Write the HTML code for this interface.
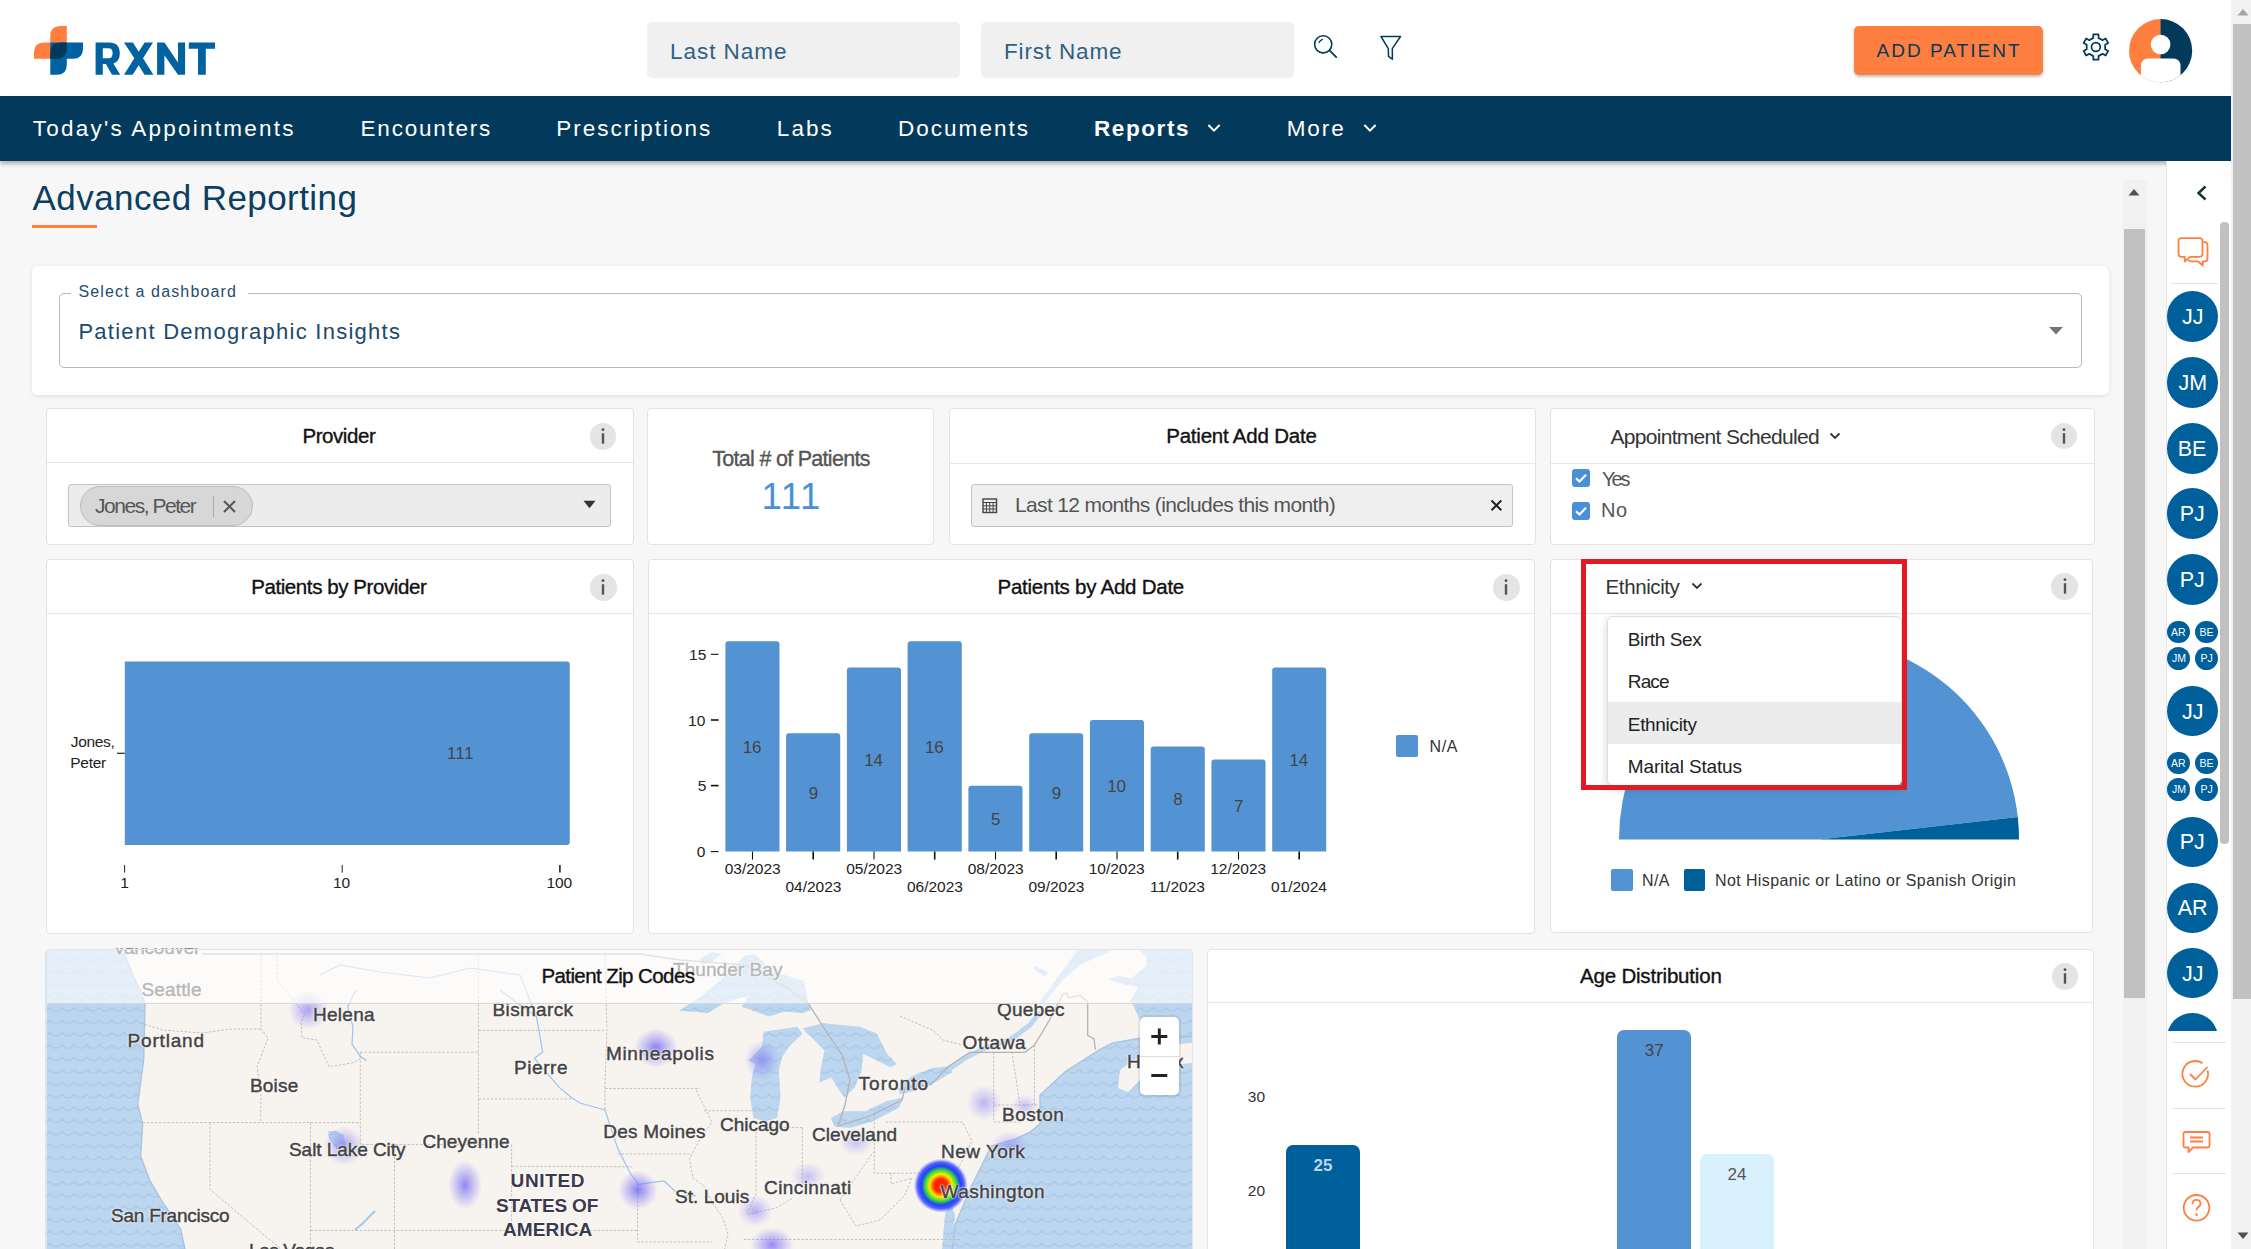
<!DOCTYPE html><html><head><meta charset="utf-8"><style>
html,body{margin:0;padding:0;width:2251px;height:1249px;overflow:hidden;font-family:"Liberation Sans",sans-serif}
</style></head><body><div style="position:relative;width:2251px;height:1249px;overflow:hidden">
<div style="position:absolute;left:0px;top:0px;width:2251px;height:1249px;background:#f7f7f7"></div>
<div style="position:absolute;left:0px;top:0px;width:2231px;height:96px;background:#fff"></div>
<svg style="position:absolute;left:0;top:0" width="230" height="96" viewBox="0 0 230 96">
<path d="M50.3 36 Q50.3 26 60.3 26 L66.8 26 L66.8 58.7 L34 58.7 L34 52.5 Q34 42.5 44 42.5 L50.3 42.5 Z" fill="#ff7f41"/>
<path d="M50.3 42.5 L83 42.5 L83 48.7 Q83 58.7 73 58.7 L66.8 58.7 L66.8 64.8 Q66.8 74.8 56.8 74.8 L50.3 74.8 Z" fill="#0062a0"/>
<path d="M50.3 52.5 Q50.3 42.5 60.3 42.5 L66.8 42.5 L66.8 48.7 Q66.8 58.7 56.8 58.7 L50.3 58.7 Z" fill="#033a5c"/>
</svg>
<svg style="position:absolute;left:0;top:0" width="230" height="96" viewBox="0 0 230 96"><g fill="#0062a0">
<path fill-rule="evenodd" d="M95.6,74.8 V42.5 H109 Q119.8,42.5 119.8,53.5 Q119.8,61.3 113.3,63.6 L120.3,74.8 H112 L105.9,63.9 H102.8 V74.8 Z M102.8,48.3 H108.6 Q112.6,48.3 112.6,53.3 Q112.6,58.3 108.6,58.3 H102.8 Z"/>
<path d="M124,42.5 H132.9 L138.7,51.8 L144.6,42.5 H153 L143,58.2 L153.4,74.8 H144.5 L138.7,65.2 L132.6,74.8 H124 L134.3,58.2 Z"/>
<path d="M157.1,74.8 V42.5 H164.4 L178,62.6 V42.5 H185.1 V74.8 H178 L164.4,55.3 V74.8 Z"/>
<path d="M188.8,42.5 H215 V48.7 H205.8 V74.8 H198 V48.7 H188.8 Z"/>
</g></svg>
<div style="position:absolute;left:647px;top:22px;width:313px;height:56px;background:#f0f0f0;border-radius:5px"></div>
<div style="position:absolute;left:981px;top:22px;width:313px;height:56px;background:#f0f0f0;border-radius:5px"></div>
<span style="position:absolute;left:670.00px;top:41.00px;font-size:22.5px;line-height:1;font-weight:400;color:#2f6184;letter-spacing:0.964px;white-space:nowrap;font-family:'Liberation Sans',sans-serif;">Last Name</span>
<span style="position:absolute;left:1004.00px;top:41.00px;font-size:22.5px;line-height:1;font-weight:400;color:#2f6184;letter-spacing:0.834px;white-space:nowrap;font-family:'Liberation Sans',sans-serif;">First Name</span>
<svg style="position:absolute;left:1300px;top:25px" width="50" height="45" viewBox="1300 25 50 45">
<circle cx="1323.2" cy="44.3" r="8.6" fill="none" stroke="#033a5c" stroke-width="1.6"/>
<path d="M1319 42.5 Q1320 40.3 1322.4 39.3" fill="none" stroke="#033a5c" stroke-width="1.3" stroke-linecap="round"/>
<path d="M1329.8 50.6 L1336.2 57.1" stroke="#033a5c" stroke-width="1.8" stroke-linecap="round"/>
</svg>
<svg style="position:absolute;left:1370px;top:25px" width="45" height="45" viewBox="1370 25 45 45">
<path d="M1381 36.5 L1400.5 36.5 L1392.3 48.6 L1392.4 59.2 L1388.5 56.3 L1388.3 48.6 Z" fill="none" stroke="#033a5c" stroke-width="1.5" stroke-linejoin="round"/>
</svg>
<div style="position:absolute;left:1854px;top:26px;width:189px;height:49px;background:#ff7f41;border-radius:5px;box-shadow:0 2px 3px rgba(0,0,0,0.25)"></div>
<span style="position:absolute;left:1876.50px;top:41.00px;font-size:19.0px;line-height:1;font-weight:400;color:#033a5c;letter-spacing:2.030px;white-space:nowrap;font-family:'Liberation Sans',sans-serif;">ADD PATIENT</span>
<svg style="position:absolute;left:2079px;top:30px" width="34" height="34" viewBox="-16.9 -17 34 34">
<polygon points="-2.62,-9.13 -2.57,-12.64 2.57,-12.64 2.62,-9.13 6.60,-6.83 9.66,-8.55 12.23,-4.09 9.22,-2.30 9.22,2.30 12.23,4.09 9.66,8.55 6.60,6.83 2.62,9.13 2.57,12.64 -2.57,12.64 -2.62,9.13 -6.60,6.83 -9.66,8.55 -12.23,4.09 -9.22,2.30 -9.22,-2.30 -12.23,-4.09 -9.66,-8.55 -6.60,-6.83" fill="none" stroke="#033a5c" stroke-width="1.75" stroke-linejoin="round"/>
<circle cx="0" cy="0" r="4.4" fill="none" stroke="#033a5c" stroke-width="1.75"/></svg>
<svg style="position:absolute;left:2128px;top:18px" width="66" height="66" viewBox="2128 18 66 66">
<defs><clipPath id="avc"><circle cx="2160.6" cy="50.7" r="31.6"/></clipPath></defs>
<g clip-path="url(#avc)">
<rect x="2128" y="18" width="33" height="66" fill="#ff7f41"/>
<rect x="2160.6" y="18" width="34" height="66" fill="#033a5c"/>
<circle cx="2160.6" cy="44.5" r="9.8" fill="#fff"/>
<rect x="2141" y="58.5" width="39.5" height="40" rx="7" fill="#fff"/>
</g></svg>
<div style="position:absolute;left:0px;top:96px;width:2231px;height:65px;background:#033a5c;box-shadow:0 3px 4px rgba(0,0,0,0.28)"></div>
<span style="position:absolute;left:32.70px;top:118.00px;font-size:22.5px;line-height:1;font-weight:400;color:#fff;letter-spacing:2.238px;white-space:nowrap;font-family:'Liberation Sans',sans-serif;">Today's Appointments</span>
<span style="position:absolute;left:360.60px;top:118.00px;font-size:22.5px;line-height:1;font-weight:400;color:#fff;letter-spacing:1.759px;white-space:nowrap;font-family:'Liberation Sans',sans-serif;">Encounters</span>
<span style="position:absolute;left:556.30px;top:118.00px;font-size:22.5px;line-height:1;font-weight:400;color:#fff;letter-spacing:1.992px;white-space:nowrap;font-family:'Liberation Sans',sans-serif;">Prescriptions</span>
<span style="position:absolute;left:776.80px;top:118.00px;font-size:22.5px;line-height:1;font-weight:400;color:#fff;letter-spacing:2.087px;white-space:nowrap;font-family:'Liberation Sans',sans-serif;">Labs</span>
<span style="position:absolute;left:897.90px;top:118.00px;font-size:22.5px;line-height:1;font-weight:400;color:#fff;letter-spacing:2.044px;white-space:nowrap;font-family:'Liberation Sans',sans-serif;">Documents</span>
<span style="position:absolute;left:1286.70px;top:118.00px;font-size:22.5px;line-height:1;font-weight:400;color:#fff;letter-spacing:1.917px;white-space:nowrap;font-family:'Liberation Sans',sans-serif;">More</span>
<span style="position:absolute;left:1093.90px;top:118.00px;font-size:22.5px;line-height:1;font-weight:700;color:#fff;letter-spacing:1.617px;white-space:nowrap;font-family:'Liberation Sans',sans-serif;">Reports</span>
<svg style="position:absolute;left:1206.4px;top:120px" width="16" height="16" viewBox="-8 -8 16 16"><path d="M-5.6 -3 L0 2.6 L5.6 -3" fill="none" stroke="#fff" stroke-width="2"/></svg>
<svg style="position:absolute;left:1361.5px;top:120px" width="16" height="16" viewBox="-8 -8 16 16"><path d="M-5.6 -3 L0 2.6 L5.6 -3" fill="none" stroke="#fff" stroke-width="2"/></svg>
<span style="position:absolute;left:32.60px;top:180.00px;font-size:35.0px;line-height:1;font-weight:400;color:#0b3f62;letter-spacing:0.418px;white-space:nowrap;font-family:'Liberation Sans',sans-serif;">Advanced Reporting</span>
<div style="position:absolute;left:32px;top:225px;width:65px;height:3px;background:#ff7f41"></div>
<div style="position:absolute;left:32px;top:266px;width:2077px;height:129px;background:#fff;border-radius:6px;box-shadow:0 1px 4px rgba(0,0,0,0.10)"></div>
<div style="position:absolute;left:59px;top:293px;width:2023px;height:75px;border:1px solid #b9b9b9;border-radius:5px;box-sizing:border-box"></div>
<div style="position:absolute;left:71px;top:290px;width:177px;height:7px;background:#fff"></div>
<span style="position:absolute;left:78.50px;top:284.00px;font-size:16.0px;line-height:1;font-weight:400;color:#1d4d6f;letter-spacing:1.148px;white-space:nowrap;font-family:'Liberation Sans',sans-serif;">Select a dashboard</span>
<span style="position:absolute;left:78.40px;top:321.00px;font-size:22.0px;line-height:1;font-weight:400;color:#1a4a6c;letter-spacing:1.268px;white-space:nowrap;font-family:'Liberation Sans',sans-serif;">Patient Demographic Insights</span>
<svg style="position:absolute;left:2045px;top:322px" width="24" height="16" viewBox="0 0 24 16"><path d="M4 5 L18 5 L11 12.4 Z" fill="#757575"/></svg>
<div style="position:absolute;left:45.5px;top:408.3px;width:588.0px;height:136.99999999999994px;background:#fff;border:1px solid #e3e3e3;border-radius:4px;box-sizing:border-box"></div>
<div style="position:absolute;left:46.5px;top:462.4px;width:586.0px;height:1.0px;background:#e6e6e6"></div>
<span style="position:absolute;left:302.40px;top:426.00px;font-size:20.5px;line-height:1;font-weight:400;color:#111;letter-spacing:-0.430px;white-space:nowrap;font-family:'Liberation Sans',sans-serif;-webkit-text-stroke:0.35px #111;">Provider</span>
<div style="position:absolute;left:589.7px;top:423.09999999999997px;width:26.6px;height:26.6px;border-radius:50%;background:#e4e4e4"></div>
<svg style="position:absolute;left:595px;top:426.4px" width="16" height="20" viewBox="0 0 16 20"><rect x="6.6" y="2.2" width="2.8" height="2.8" rx="1.2" fill="#555"/><rect x="6.8" y="7.2" width="2.4" height="10.5" fill="#555"/></svg>
<div style="position:absolute;left:68.3px;top:484.1px;width:542.3000000000001px;height:43.19999999999993px;background:#ececec;border:1px solid #c4c4c4;border-radius:3px;box-sizing:border-box"></div>
<div style="position:absolute;left:80.4px;top:485.6px;width:172.2px;height:40.799999999999955px;background:#d7d7d7;border:1px solid #bdbdbd;border-radius:21px;box-sizing:border-box"></div>
<span style="position:absolute;left:95.00px;top:495.00px;font-size:21.0px;line-height:1;font-weight:400;color:#555;letter-spacing:-1.473px;white-space:nowrap;font-family:'Liberation Sans',sans-serif;">Jones, Peter</span>
<div style="position:absolute;left:212.8px;top:496px;width:1.0px;height:21px;background:#aaa"></div>
<svg style="position:absolute;left:221px;top:498px" width="17" height="17" viewBox="0 0 17 17"><path d="M3 3 L14 14 M14 3 L3 14" stroke="#555" stroke-width="2"/></svg>
<svg style="position:absolute;left:580px;top:497px" width="20" height="14" viewBox="0 0 20 14"><path d="M3.5 3.8 L15.5 3.8 L9.5 11.3 Z" fill="#333"/></svg>
<div style="position:absolute;left:647.4px;top:408.2px;width:286.80000000000007px;height:136.90000000000003px;background:#fff;border:1px solid #e3e3e3;border-radius:4px;box-sizing:border-box"></div>
<span style="position:absolute;left:712.30px;top:449.00px;font-size:21.5px;line-height:1;font-weight:400;color:#555;letter-spacing:-0.709px;white-space:nowrap;font-family:'Liberation Sans',sans-serif;-webkit-text-stroke:0.35px #555;">Total # of Patients</span>
<span style="position:absolute;left:761.40px;top:479.00px;font-size:36.5px;line-height:1;font-weight:400;color:#4a90d9;letter-spacing:1.709px;white-space:nowrap;font-family:'Liberation Sans',sans-serif;">111</span>
<div style="position:absolute;left:948.5px;top:408.2px;width:587.7px;height:136.90000000000003px;background:#fff;border:1px solid #e3e3e3;border-radius:4px;box-sizing:border-box"></div>
<div style="position:absolute;left:949.5px;top:462.5px;width:585.7px;height:1.0px;background:#e6e6e6"></div>
<span style="position:absolute;left:1166.20px;top:426.00px;font-size:20.5px;line-height:1;font-weight:400;color:#111;letter-spacing:-0.213px;white-space:nowrap;font-family:'Liberation Sans',sans-serif;-webkit-text-stroke:0.35px #111;">Patient Add Date</span>
<div style="position:absolute;left:971px;top:483.8px;width:542.3px;height:43.69999999999999px;background:#efefef;border:1px solid #c4c4c4;border-radius:3px;box-sizing:border-box"></div>
<svg style="position:absolute;left:982px;top:497px" width="16" height="17" viewBox="0 0 16 17"><rect x="1" y="2" width="13.5" height="13.5" fill="none" stroke="#444" stroke-width="1.4"/><path d="M1 5.5 H14.5 M1 8.8 H14.5 M1 12 H14.5 M4.4 5.5 V15.5 M7.75 5.5 V15.5 M11.1 5.5 V15.5" stroke="#444" stroke-width="1"/></svg>
<span style="position:absolute;left:1015.00px;top:494.00px;font-size:21.0px;line-height:1;font-weight:400;color:#555;letter-spacing:-0.642px;white-space:nowrap;font-family:'Liberation Sans',sans-serif;">Last 12 months (includes this month)</span>
<svg style="position:absolute;left:1489px;top:498px" width="15" height="15" viewBox="0 0 15 15"><path d="M2.5 2.5 L12.3 12.3 M12.3 2.5 L2.5 12.3" stroke="#222" stroke-width="2"/></svg>
<div style="position:absolute;left:1549.6px;top:408.4px;width:545.0px;height:136.70000000000005px;background:#fff;border:1px solid #e3e3e3;border-radius:4px;box-sizing:border-box"></div>
<div style="position:absolute;left:1550.6px;top:463.3px;width:543.0px;height:1.0px;background:#e6e6e6"></div>
<span style="position:absolute;left:1610.40px;top:426.00px;font-size:21.0px;line-height:1;font-weight:400;color:#333;letter-spacing:-0.686px;white-space:nowrap;font-family:'Liberation Sans',sans-serif;">Appointment Scheduled</span>
<svg style="position:absolute;left:1827px;top:428px" width="16" height="16" viewBox="0 0 16 16"><path d="M3.5 5.5 L8 10 L12.5 5.5" fill="none" stroke="#333" stroke-width="1.8"/></svg>
<div style="position:absolute;left:2050.8999999999996px;top:422.9px;width:26.6px;height:26.6px;border-radius:50%;background:#e4e4e4"></div>
<svg style="position:absolute;left:2056.2px;top:426.2px" width="16" height="20" viewBox="0 0 16 20"><rect x="6.6" y="2.2" width="2.8" height="2.8" rx="1.2" fill="#555"/><rect x="6.8" y="7.2" width="2.4" height="10.5" fill="#555"/></svg>
<svg style="position:absolute;left:1571.5px;top:468.9px" width="18" height="18" viewBox="0 0 18 18"><rect x="0" y="0" width="18" height="18" rx="3" fill="#4a90d9"/><path d="M4 9.3 L7.5 12.5 L14 5.8" fill="none" stroke="#fff" stroke-width="2.2"/></svg>
<span style="position:absolute;left:1602.00px;top:469.00px;font-size:20.0px;line-height:1;font-weight:400;color:#555;letter-spacing:-2.113px;white-space:nowrap;font-family:'Liberation Sans',sans-serif;">Yes</span>
<svg style="position:absolute;left:1571.5px;top:501.8px" width="18" height="18" viewBox="0 0 18 18"><rect x="0" y="0" width="18" height="18" rx="3" fill="#4a90d9"/><path d="M4 9.3 L7.5 12.5 L14 5.8" fill="none" stroke="#fff" stroke-width="2.2"/></svg>
<span style="position:absolute;left:1601.00px;top:500.00px;font-size:20.0px;line-height:1;font-weight:400;color:#555;letter-spacing:0.557px;white-space:nowrap;font-family:'Liberation Sans',sans-serif;">No</span>
<div style="position:absolute;left:45.5px;top:559.3px;width:588.1px;height:375.0px;background:#fff;border:1px solid #e3e3e3;border-radius:4px;box-sizing:border-box"></div>
<div style="position:absolute;left:46.5px;top:613px;width:586.1px;height:1px;background:#e6e6e6"></div>
<span style="position:absolute;left:251.20px;top:577.00px;font-size:20.5px;line-height:1;font-weight:400;color:#111;letter-spacing:-0.412px;white-space:nowrap;font-family:'Liberation Sans',sans-serif;-webkit-text-stroke:0.35px #111;">Patients by Provider</span>
<div style="position:absolute;left:590.1px;top:574.1px;width:26.6px;height:26.6px;border-radius:50%;background:#e4e4e4"></div>
<svg style="position:absolute;left:595.4px;top:577.4px" width="16" height="20" viewBox="0 0 16 20"><rect x="6.6" y="2.2" width="2.8" height="2.8" rx="1.2" fill="#555"/><rect x="6.8" y="7.2" width="2.4" height="10.5" fill="#555"/></svg>
<svg style="position:absolute;left:0;top:0" width="700" height="940" viewBox="0 0 700 940">
<path d="M124.8 661.4 H566.8 Q569.8 661.4 569.8 664.4 V841.9 Q569.8 844.9 566.8 844.9 H124.8 Z" fill="#5393d3"/>
<path d="M117 753.3 H124.8" stroke="#222" stroke-width="1.2"/>
<path d="M124.6 865 V872.6 M342.2 865 V872.6" stroke="#222" stroke-width="1"/>
<path d="M559.9 865 V872.6" stroke="#222" stroke-width="1.6"/>
</svg>
<span style="position:absolute;left:447.00px;top:745.00px;font-size:16.5px;line-height:1;font-weight:400;color:#444;letter-spacing:0.648px;white-space:nowrap;font-family:'Liberation Sans',sans-serif;">111</span>
<span style="position:absolute;left:70.80px;top:734.00px;font-size:15.5px;line-height:1;font-weight:400;color:#222;letter-spacing:-0.352px;white-space:nowrap;font-family:'Liberation Sans',sans-serif;">Jones,</span>
<span style="position:absolute;left:70.30px;top:755.00px;font-size:15.5px;line-height:1;font-weight:400;color:#222;letter-spacing:-0.296px;white-space:nowrap;font-family:'Liberation Sans',sans-serif;">Peter</span>
<span style="position:absolute;left:120.20px;top:875.00px;font-size:15.5px;line-height:1;font-weight:400;color:#222;letter-spacing:0.000px;white-space:nowrap;font-family:'Liberation Sans',sans-serif;">1</span>
<span style="position:absolute;left:332.89px;top:875.00px;font-size:15.5px;line-height:1;font-weight:400;color:#222;letter-spacing:0.000px;white-space:nowrap;font-family:'Liberation Sans',sans-serif;">10</span>
<span style="position:absolute;left:546.38px;top:875.00px;font-size:15.5px;line-height:1;font-weight:400;color:#222;letter-spacing:0.000px;white-space:nowrap;font-family:'Liberation Sans',sans-serif;">100</span>
<div style="position:absolute;left:647.7px;top:559.3px;width:887.0999999999999px;height:375.0px;background:#fff;border:1px solid #e3e3e3;border-radius:4px;box-sizing:border-box"></div>
<div style="position:absolute;left:648.7px;top:613px;width:885.0999999999999px;height:1px;background:#e6e6e6"></div>
<span style="position:absolute;left:997.50px;top:577.00px;font-size:20.5px;line-height:1;font-weight:400;color:#111;letter-spacing:-0.247px;white-space:nowrap;font-family:'Liberation Sans',sans-serif;-webkit-text-stroke:0.35px #111;">Patients by Add Date</span>
<div style="position:absolute;left:1493.1000000000001px;top:574.1px;width:26.6px;height:26.6px;border-radius:50%;background:#e4e4e4"></div>
<svg style="position:absolute;left:1498.4px;top:577.4px" width="16" height="20" viewBox="0 0 16 20"><rect x="6.6" y="2.2" width="2.8" height="2.8" rx="1.2" fill="#555"/><rect x="6.8" y="7.2" width="2.4" height="10.5" fill="#555"/></svg>
<svg style="position:absolute;left:0;top:0" width="1600" height="940" viewBox="0 0 1600 940"><path d="M725.4 851.6 V644.2 Q725.4 641.2 728.4 641.2 H776.5 Q779.5 641.2 779.5 644.2 V851.6 Z" fill="#5393d3"/><path d="M752.5 851.6 V859.6" stroke="#111" stroke-width="1.1"/><path d="M786.1 851.6 V736.2 Q786.1 733.2 789.1 733.2 H837.2 Q840.2 733.2 840.2 736.2 V851.6 Z" fill="#5393d3"/><path d="M813.2 851.6 V859.6" stroke="#111" stroke-width="1.6"/><path d="M846.9 851.6 V670.5 Q846.9 667.5 849.9 667.5 H898.0 Q901.0 667.5 901.0 670.5 V851.6 Z" fill="#5393d3"/><path d="M874.0 851.6 V859.6" stroke="#111" stroke-width="1.1"/><path d="M907.6 851.6 V644.2 Q907.6 641.2 910.6 641.2 H958.8 Q961.8 641.2 961.8 644.2 V851.6 Z" fill="#5393d3"/><path d="M934.7 851.6 V859.6" stroke="#111" stroke-width="1.6"/><path d="M968.4 851.6 V788.8 Q968.4 785.8 971.4 785.8 H1019.5 Q1022.5 785.8 1022.5 788.8 V851.6 Z" fill="#5393d3"/><path d="M995.5 851.6 V859.6" stroke="#111" stroke-width="1.1"/><path d="M1029.2 851.6 V736.2 Q1029.2 733.2 1032.2 733.2 H1080.2 Q1083.2 733.2 1083.2 736.2 V851.6 Z" fill="#5393d3"/><path d="M1056.2 851.6 V859.6" stroke="#111" stroke-width="1.6"/><path d="M1089.9 851.6 V723.1 Q1089.9 720.1 1092.9 720.1 H1141.0 Q1144.0 720.1 1144.0 723.1 V851.6 Z" fill="#5393d3"/><path d="M1117.0 851.6 V859.6" stroke="#111" stroke-width="1.1"/><path d="M1150.7 851.6 V749.4 Q1150.7 746.4 1153.7 746.4 H1201.8 Q1204.8 746.4 1204.8 749.4 V851.6 Z" fill="#5393d3"/><path d="M1177.7 851.6 V859.6" stroke="#111" stroke-width="1.6"/><path d="M1211.4 851.6 V762.5 Q1211.4 759.5 1214.4 759.5 H1262.5 Q1265.5 759.5 1265.5 762.5 V851.6 Z" fill="#5393d3"/><path d="M1238.5 851.6 V859.6" stroke="#111" stroke-width="1.1"/><path d="M1272.2 851.6 V670.5 Q1272.2 667.5 1275.2 667.5 H1323.2 Q1326.2 667.5 1326.2 670.5 V851.6 Z" fill="#5393d3"/><path d="M1299.2 851.6 V859.6" stroke="#111" stroke-width="1.6"/><path d="M710.9 654.3 H718.6" stroke="#111" stroke-width="1.1"/><path d="M710.9 720 H718.6" stroke="#111" stroke-width="1.6"/><path d="M710.9 785.6 H718.6" stroke="#111" stroke-width="1.6"/><path d="M710.9 851.6 H718.6" stroke="#111" stroke-width="1.1"/></svg>
<span style="position:absolute;left:742.67px;top:739.00px;font-size:17.0px;line-height:1;font-weight:400;color:#444;letter-spacing:0.000px;white-space:nowrap;font-family:'Liberation Sans',sans-serif;">16</span>
<span style="position:absolute;left:724.70px;top:861.00px;font-size:15.5px;line-height:1;font-weight:400;color:#222;letter-spacing:0.000px;white-space:nowrap;font-family:'Liberation Sans',sans-serif;">03/2023</span>
<span style="position:absolute;left:808.65px;top:785.00px;font-size:17.0px;line-height:1;font-weight:400;color:#444;letter-spacing:0.000px;white-space:nowrap;font-family:'Liberation Sans',sans-serif;">9</span>
<span style="position:absolute;left:785.45px;top:879.00px;font-size:15.5px;line-height:1;font-weight:400;color:#222;letter-spacing:0.000px;white-space:nowrap;font-family:'Liberation Sans',sans-serif;">04/2023</span>
<span style="position:absolute;left:864.17px;top:752.00px;font-size:17.0px;line-height:1;font-weight:400;color:#444;letter-spacing:0.000px;white-space:nowrap;font-family:'Liberation Sans',sans-serif;">14</span>
<span style="position:absolute;left:846.20px;top:861.00px;font-size:15.5px;line-height:1;font-weight:400;color:#222;letter-spacing:0.000px;white-space:nowrap;font-family:'Liberation Sans',sans-serif;">05/2023</span>
<span style="position:absolute;left:924.92px;top:739.00px;font-size:17.0px;line-height:1;font-weight:400;color:#444;letter-spacing:0.000px;white-space:nowrap;font-family:'Liberation Sans',sans-serif;">16</span>
<span style="position:absolute;left:906.95px;top:879.00px;font-size:15.5px;line-height:1;font-weight:400;color:#222;letter-spacing:0.000px;white-space:nowrap;font-family:'Liberation Sans',sans-serif;">06/2023</span>
<span style="position:absolute;left:990.90px;top:811.00px;font-size:17.0px;line-height:1;font-weight:400;color:#444;letter-spacing:0.000px;white-space:nowrap;font-family:'Liberation Sans',sans-serif;">5</span>
<span style="position:absolute;left:967.70px;top:861.00px;font-size:15.5px;line-height:1;font-weight:400;color:#222;letter-spacing:0.000px;white-space:nowrap;font-family:'Liberation Sans',sans-serif;">08/2023</span>
<span style="position:absolute;left:1051.65px;top:785.00px;font-size:17.0px;line-height:1;font-weight:400;color:#444;letter-spacing:0.000px;white-space:nowrap;font-family:'Liberation Sans',sans-serif;">9</span>
<span style="position:absolute;left:1028.45px;top:879.00px;font-size:15.5px;line-height:1;font-weight:400;color:#222;letter-spacing:0.000px;white-space:nowrap;font-family:'Liberation Sans',sans-serif;">09/2023</span>
<span style="position:absolute;left:1107.17px;top:778.00px;font-size:17.0px;line-height:1;font-weight:400;color:#444;letter-spacing:0.000px;white-space:nowrap;font-family:'Liberation Sans',sans-serif;">10</span>
<span style="position:absolute;left:1088.70px;top:861.00px;font-size:15.5px;line-height:1;font-weight:400;color:#222;letter-spacing:0.000px;white-space:nowrap;font-family:'Liberation Sans',sans-serif;">10/2023</span>
<span style="position:absolute;left:1173.15px;top:791.00px;font-size:17.0px;line-height:1;font-weight:400;color:#444;letter-spacing:0.000px;white-space:nowrap;font-family:'Liberation Sans',sans-serif;">8</span>
<span style="position:absolute;left:1150.02px;top:879.00px;font-size:15.5px;line-height:1;font-weight:400;color:#222;letter-spacing:0.000px;white-space:nowrap;font-family:'Liberation Sans',sans-serif;">11/2023</span>
<span style="position:absolute;left:1233.90px;top:798.00px;font-size:17.0px;line-height:1;font-weight:400;color:#444;letter-spacing:0.000px;white-space:nowrap;font-family:'Liberation Sans',sans-serif;">7</span>
<span style="position:absolute;left:1210.20px;top:861.00px;font-size:15.5px;line-height:1;font-weight:400;color:#222;letter-spacing:0.000px;white-space:nowrap;font-family:'Liberation Sans',sans-serif;">12/2023</span>
<span style="position:absolute;left:1289.42px;top:752.00px;font-size:17.0px;line-height:1;font-weight:400;color:#444;letter-spacing:0.000px;white-space:nowrap;font-family:'Liberation Sans',sans-serif;">14</span>
<span style="position:absolute;left:1270.95px;top:879.00px;font-size:15.5px;line-height:1;font-weight:400;color:#222;letter-spacing:0.000px;white-space:nowrap;font-family:'Liberation Sans',sans-serif;">01/2024</span>
<span style="position:absolute;left:689.08px;top:647.00px;font-size:15.5px;line-height:1;font-weight:400;color:#222;letter-spacing:0.000px;white-space:nowrap;font-family:'Liberation Sans',sans-serif;">15</span>
<span style="position:absolute;left:688.08px;top:713.00px;font-size:15.5px;line-height:1;font-weight:400;color:#222;letter-spacing:0.000px;white-space:nowrap;font-family:'Liberation Sans',sans-serif;">10</span>
<span style="position:absolute;left:697.70px;top:778.00px;font-size:15.5px;line-height:1;font-weight:400;color:#222;letter-spacing:0.000px;white-space:nowrap;font-family:'Liberation Sans',sans-serif;">5</span>
<span style="position:absolute;left:696.70px;top:844.00px;font-size:15.5px;line-height:1;font-weight:400;color:#222;letter-spacing:0.000px;white-space:nowrap;font-family:'Liberation Sans',sans-serif;">0</span>
<div style="position:absolute;left:1396px;top:734.8px;width:22.200000000000045px;height:22.5px;background:#5393d3;border-radius:2px"></div>
<span style="position:absolute;left:1429.60px;top:739.00px;font-size:16.0px;line-height:1;font-weight:400;color:#333;letter-spacing:0.550px;white-space:nowrap;font-family:'Liberation Sans',sans-serif;">N/A</span>
<div style="position:absolute;left:1549.6px;top:559.3px;width:543.9000000000001px;height:374.1px;background:#fff;border:1px solid #e3e3e3;border-radius:4px;box-sizing:border-box"></div>
<div style="position:absolute;left:1550.6px;top:613px;width:541.9000000000001px;height:1px;background:#e6e6e6"></div>
<div style="position:absolute;left:2051.2999999999997px;top:573.1px;width:26.6px;height:26.6px;border-radius:50%;background:#e4e4e4"></div>
<svg style="position:absolute;left:2056.6px;top:576.4px" width="16" height="20" viewBox="0 0 16 20"><rect x="6.6" y="2.2" width="2.8" height="2.8" rx="1.2" fill="#555"/><rect x="6.8" y="7.2" width="2.4" height="10.5" fill="#555"/></svg>
<svg style="position:absolute;left:1500px;top:600px" width="600" height="300" viewBox="1500 600 600 300">
<path d="M1619 839.4 A200 200 0 0 1 2017.8 817.1 L1819 839.4 Z" fill="#5393d3"/>
<path d="M2017.8 817.1 A200 200 0 0 1 2019 839.4 L1819 839.4 Z" fill="#00609c"/>
</svg>
<div style="position:absolute;left:1611.3px;top:869.3px;width:22.100000000000136px;height:21.700000000000045px;background:#5393d3;border-radius:2px"></div>
<span style="position:absolute;left:1642.00px;top:873.00px;font-size:16.0px;line-height:1;font-weight:400;color:#333;letter-spacing:0.400px;white-space:nowrap;font-family:'Liberation Sans',sans-serif;">N/A</span>
<div style="position:absolute;left:1684.3px;top:869.3px;width:20.90000000000009px;height:21.700000000000045px;background:#00609c;border-radius:2px"></div>
<span style="position:absolute;left:1715.00px;top:873.00px;font-size:16.0px;line-height:1;font-weight:400;color:#333;letter-spacing:0.395px;white-space:nowrap;font-family:'Liberation Sans',sans-serif;">Not Hispanic or Latino or Spanish Origin</span>
<span style="position:absolute;left:1605.60px;top:577.00px;font-size:20.5px;line-height:1;font-weight:400;color:#333;letter-spacing:-0.403px;white-space:nowrap;font-family:'Liberation Sans',sans-serif;">Ethnicity</span>
<svg style="position:absolute;left:1689px;top:578px" width="16" height="16" viewBox="0 0 16 16"><path d="M3.5 5.5 L8 10 L12.5 5.5" fill="none" stroke="#333" stroke-width="1.8"/></svg>
<div style="position:absolute;left:1606.6px;top:616px;width:295.4000000000001px;height:170px;background:#fff;border:1px solid #ddd;border-radius:6px;box-sizing:border-box;box-shadow:0 3px 10px rgba(0,0,0,0.18)"></div>
<div style="position:absolute;left:1607.6px;top:702.3px;width:293.4000000000001px;height:42.200000000000045px;background:#ececec"></div>
<span style="position:absolute;left:1627.80px;top:630.00px;font-size:19.0px;line-height:1;font-weight:400;color:#222;letter-spacing:-0.386px;white-space:nowrap;font-family:'Liberation Sans',sans-serif;">Birth Sex</span>
<span style="position:absolute;left:1627.80px;top:672.00px;font-size:19.0px;line-height:1;font-weight:400;color:#222;letter-spacing:-0.863px;white-space:nowrap;font-family:'Liberation Sans',sans-serif;">Race</span>
<span style="position:absolute;left:1627.80px;top:715.00px;font-size:19.0px;line-height:1;font-weight:400;color:#222;letter-spacing:-0.326px;white-space:nowrap;font-family:'Liberation Sans',sans-serif;">Ethnicity</span>
<span style="position:absolute;left:1627.80px;top:757.00px;font-size:19.0px;line-height:1;font-weight:400;color:#222;letter-spacing:-0.150px;white-space:nowrap;font-family:'Liberation Sans',sans-serif;">Marital Status</span>
<div style="position:absolute;left:1581px;top:559px;width:326px;height:231px;border:5px solid #e11b22;box-sizing:border-box"></div>
<div style="position:absolute;left:1206.9px;top:948.9px;width:887.0999999999999px;height:311.1px;background:#fff;border:1px solid #e3e3e3;border-radius:4px;box-sizing:border-box"></div>
<div style="position:absolute;left:1207.9px;top:1001.8px;width:885.0999999999999px;height:1.0px;background:#e6e6e6"></div>
<span style="position:absolute;left:1580.00px;top:966.00px;font-size:20.5px;line-height:1;font-weight:400;color:#111;letter-spacing:-0.194px;white-space:nowrap;font-family:'Liberation Sans',sans-serif;-webkit-text-stroke:0.35px #111;">Age Distribution</span>
<div style="position:absolute;left:2051.7px;top:963.1px;width:26.6px;height:26.6px;border-radius:50%;background:#e4e4e4"></div>
<svg style="position:absolute;left:2057px;top:966.4px" width="16" height="20" viewBox="0 0 16 20"><rect x="6.6" y="2.2" width="2.8" height="2.8" rx="1.2" fill="#555"/><rect x="6.8" y="7.2" width="2.4" height="10.5" fill="#555"/></svg>
<span style="position:absolute;left:1247.70px;top:1089.00px;font-size:15.5px;line-height:1;font-weight:400;color:#333;letter-spacing:0.180px;white-space:nowrap;font-family:'Liberation Sans',sans-serif;">30</span>
<span style="position:absolute;left:1247.70px;top:1183.00px;font-size:15.5px;line-height:1;font-weight:400;color:#333;letter-spacing:0.180px;white-space:nowrap;font-family:'Liberation Sans',sans-serif;">20</span>
<div style="position:absolute;left:1285.7px;top:1145px;width:74.29999999999995px;height:115px;background:#00609c;border-radius:7px 7px 0 0"></div>
<span style="position:absolute;left:1313.62px;top:1157.00px;font-size:17.0px;line-height:1;font-weight:700;color:#bcd6ea;letter-spacing:0.000px;white-space:nowrap;font-family:'Liberation Sans',sans-serif;">25</span>
<div style="position:absolute;left:1617.1px;top:1029.7px;width:74.0px;height:230.29999999999995px;background:#5393d3;border-radius:7px 7px 0 0"></div>
<span style="position:absolute;left:1644.87px;top:1042.00px;font-size:17.0px;line-height:1;font-weight:400;color:#444;letter-spacing:0.000px;white-space:nowrap;font-family:'Liberation Sans',sans-serif;">37</span>
<div style="position:absolute;left:1699.6px;top:1154.2px;width:74.40000000000009px;height:105.79999999999995px;background:#d9f1fc;border-radius:7px 7px 0 0"></div>
<span style="position:absolute;left:1727.57px;top:1166.00px;font-size:17.0px;line-height:1;font-weight:400;color:#555;letter-spacing:0.000px;white-space:nowrap;font-family:'Liberation Sans',sans-serif;">24</span>
<svg style="position:absolute;left:0;top:900px" width="1210" height="349" viewBox="0 900 1210 349"><defs><pattern id="wv" width="12.4" height="12.4" patternUnits="userSpaceOnUse"><path d="M-0.2 3 Q6.2 10.5 12.6 3" fill="none" stroke="#a9c7e6" stroke-width="1.3"/></pattern><radialGradient id="hot"><stop offset="0" stop-color="#ff1500"/><stop offset="0.25" stop-color="#ff2a00"/><stop offset="0.42" stop-color="#ffea00"/><stop offset="0.58" stop-color="#2fdc3a"/><stop offset="0.72" stop-color="#2240ff"/><stop offset="0.86" stop-color="#2a3cff" stop-opacity="0.8"/><stop offset="1" stop-color="#4a5cff" stop-opacity="0"/></radialGradient><radialGradient id="pb"><stop offset="0" stop-color="#6f62f2" stop-opacity="0.8"/><stop offset="0.45" stop-color="#7d70f2" stop-opacity="0.45"/><stop offset="1" stop-color="#8a7df2" stop-opacity="0"/></radialGradient><clipPath id="mc"><rect x="45.5" y="949.0" width="1147.2" height="310.5" rx="4"/></clipPath></defs><g clip-path="url(#mc)"><rect x="45.5" y="948.5" width="1147.2" height="310.5" fill="#f7f4f0"/><path d="M40,940 L118,940 L125,955 L133,975 L140,990 L145,1003 L144.7,1020 L143.7,1060 L137.7,1104 L142.7,1124 L140.7,1156 L149.7,1180 L160.7,1199 L180.6,1229 L185,1249 L40,1260 Z" fill="#bcd6f0"/><path d="M40,940 L118,940 L125,955 L133,975 L140,990 L145,1003 L144.7,1020 L143.7,1060 L137.7,1104 L142.7,1124 L140.7,1156 L149.7,1180 L160.7,1199 L180.6,1229 L185,1249 L40,1260 Z" fill="url(#wv)"/><path d="M679.1,1010.7 L701,996.3 L721.4,979.4 L745,955.8 L755.1,954 L772,971 L804.1,981.1 L807.5,999.7 L810.9,1009.8 L802.4,1013.2 L785.5,1011.5 L768.6,1016.6 L755.1,1011.5 L741.6,1006.4 L748.4,996.3 L738.2,998 L721.4,1004.7 L707.8,1013.2 L692.6,1011.5 Z" fill="#bcd6f0"/><path d="M679.1,1010.7 L701,996.3 L721.4,979.4 L745,955.8 L755.1,954 L772,971 L804.1,981.1 L807.5,999.7 L810.9,1009.8 L802.4,1013.2 L785.5,1011.5 L768.6,1016.6 L755.1,1011.5 L741.6,1006.4 L748.4,996.3 L738.2,998 L721.4,1004.7 L707.8,1013.2 L692.6,1011.5 Z" fill="url(#wv)"/><path d="M763.6,1031.8 L797.4,1026.7 L802.4,1033.5 L788.9,1047 L782.2,1057.1 L778.8,1070.6 L780.5,1097.6 L777.1,1117.9 L765.3,1121.3 L753.4,1117.9 L750.1,1097.6 L751.8,1077.4 L755.1,1063.9 L748.4,1060.5 L761.9,1047 Z" fill="#bcd6f0"/><path d="M763.6,1031.8 L797.4,1026.7 L802.4,1033.5 L788.9,1047 L782.2,1057.1 L778.8,1070.6 L780.5,1097.6 L777.1,1117.9 L765.3,1121.3 L753.4,1117.9 L750.1,1097.6 L751.8,1077.4 L755.1,1063.9 L748.4,1060.5 L761.9,1047 Z" fill="url(#wv)"/><path d="M802.4,1028.4 L822.7,1023.3 L859.9,1026.7 L876.8,1033.5 L886.9,1053.7 L897,1063.9 L890.3,1067.2 L863.2,1053.7 L861.6,1070.6 L854.8,1087.5 L844.7,1097.6 L839.6,1090.9 L831.1,1077.4 L819.3,1082.4 L821,1067.2 L824.4,1050.3 L810.9,1036.8 Z" fill="#bcd6f0"/><path d="M802.4,1028.4 L822.7,1023.3 L859.9,1026.7 L876.8,1033.5 L886.9,1053.7 L897,1063.9 L890.3,1067.2 L863.2,1053.7 L861.6,1070.6 L854.8,1087.5 L844.7,1097.6 L839.6,1090.9 L831.1,1077.4 L819.3,1082.4 L821,1067.2 L824.4,1050.3 L810.9,1036.8 Z" fill="url(#wv)"/><path d="M831.1,1117.9 L843,1111.2 L864.9,1111.2 L886.9,1101 L903.8,1097.6 L898.7,1107.8 L873.4,1121.3 L849.7,1128 L834.5,1126.4 Z" fill="#bcd6f0"/><path d="M831.1,1117.9 L843,1111.2 L864.9,1111.2 L886.9,1101 L903.8,1097.6 L898.7,1107.8 L873.4,1121.3 L849.7,1128 L834.5,1126.4 Z" fill="url(#wv)"/><path d="M898,1089 L912,1076 L932,1068 L951,1066 L952,1072 L936,1082 L915,1091 L900,1094 Z" fill="#bcd6f0"/><path d="M898,1089 L912,1076 L932,1068 L951,1066 L952,1072 L936,1082 L915,1091 L900,1094 Z" fill="url(#wv)"/><path d="M1039.5,1002 L1078.4,949 L1115,949 L1081.3,964 L1063,979.5 L1044,1003.6 Z" fill="#bcd6f0"/><path d="M1039.5,1002 L1078.4,949 L1115,949 L1081.3,964 L1063,979.5 L1044,1003.6 Z" fill="url(#wv)"/><path d="M951,1260 L955,1225 L970,1189 L982,1165 L991,1146 L1015,1139 L1030,1132 L1040,1124 L1040,1095 L1066,1071 L1099,1050 L1112,1043 L1141,1038 L1160,1040 L1200,1035 L1200,1260 Z" fill="#bcd6f0"/><path d="M951,1260 L955,1225 L970,1189 L982,1165 L991,1146 L1015,1139 L1030,1132 L1040,1124 L1040,1095 L1066,1071 L1099,1050 L1112,1043 L1141,1038 L1160,1040 L1200,1035 L1200,1260 Z" fill="url(#wv)"/><path d="M1138.5,949 L1200,940 L1200,1040 L1150,1045 L1140,1020 L1132,1003 L1129.7,1002 L1138.5,986.8 L1125.3,984.6 L1107,979.5 L1119.4,975.8 L1130.4,978.7 L1146.6,966.3 L1146.6,956.7 Z" fill="#bcd6f0"/><path d="M1138.5,949 L1200,940 L1200,1040 L1150,1045 L1140,1020 L1132,1003 L1129.7,1002 L1138.5,986.8 L1125.3,984.6 L1107,979.5 L1119.4,975.8 L1130.4,978.7 L1146.6,966.3 L1146.6,956.7 Z" fill="url(#wv)"/><path d="M1033,968.5 L1036,966 L1048,972 L1045,977 Z" fill="#bcd6f0"/><path d="M1033,968.5 L1036,966 L1048,972 L1045,977 Z" fill="url(#wv)"/><path d="M700,958 L712,952 L722,954 L712,962 L702,965 Z" fill="#bcd6f0"/><path d="M700,958 L712,952 L722,954 L712,962 L702,965 Z" fill="url(#wv)"/><path d="M942,1249 L945,1215 L950,1200 L955,1215 L952,1249 Z" fill="#bcd6f0"/><path d="M942,1249 L945,1215 L950,1200 L955,1215 L952,1249 Z" fill="url(#wv)"/><path d="M328,1131 L336,1131 L343.7,1135 L345.7,1147.6 L337.4,1149.7 L329,1139 Z" fill="#bcd6f0"/><path d="M328,1131 L336,1131 L343.7,1135 L345.7,1147.6 L337.4,1149.7 L329,1139 Z" fill="url(#wv)"/><path d="M133,955 L140,950 L150,960 L160,975 L148,985 L142,975 Z" fill="#f7f4f0"/><path d="M355,1230 L362,1224 L370,1216 L375,1211" fill="none" stroke="#a9c7ea" stroke-width="2.2"/><path d="M1118,1088 L1120,1070 L1141,1055 L1170,1045 L1200,1042 L1200,1062 L1165,1066 L1140,1080 L1128,1092 Z" fill="#f7f4f0"/><path d="M951,1068 L965,1058 L985,1048 L1010,1040 L1030,1025 L1040,1012" fill="none" stroke="#bcd6f0" stroke-width="5"/><path d="M40,940 L118,940 L125,955 L133,975 L140,990 L145,1003 L144.7,1020 L143.7,1060 L137.7,1104 L142.7,1124 L140.7,1156 L149.7,1180 L160.7,1199 L180.6,1229 L185,1249 L40,1260 Z" fill="none" stroke="#a7c3e2" stroke-width="1.3"/><path d="M951,1260 L955,1225 L970,1189 L982,1165 L991,1146 L1015,1139 L1030,1132 L1040,1124 L1040,1095 L1066,1071 L1099,1050 L1112,1043 L1141,1038 L1160,1040 L1200,1035 L1200,1260 Z" fill="none" stroke="#a7c3e2" stroke-width="1.3"/><path d="M142.7,1122.6 L360.3,1122.6" fill="none" stroke="#bdb8bc" stroke-width="0.9" stroke-dasharray="2.5,1.6"/><path d="M210,1122.6 L210,1189.4 L245,1219 L300,1265" fill="none" stroke="#bdb8bc" stroke-width="0.9" stroke-dasharray="2.5,1.6"/><path d="M140.7,1023 L162.6,1030 L202,1033 L231.6,1029 L261,1029" fill="none" stroke="#bdb8bc" stroke-width="0.9" stroke-dasharray="2.5,1.6"/><path d="M261,955 L261,1029 L268,1038 L257,1067 L261,1090 L260.7,1122.6" fill="none" stroke="#bdb8bc" stroke-width="0.9" stroke-dasharray="2.5,1.6"/><path d="M277,955.7 L277,979.6 L295.5,1003.6 L305,1014 L301,1022 L302,1038 L316.7,1039.8 L329,1066.7 L354,1062.6 L360.3,1058.4" fill="none" stroke="#bdb8bc" stroke-width="0.9" stroke-dasharray="2.5,1.6"/><path d="M360.3,1052.2 L478.4,1052.2" fill="none" stroke="#bdb8bc" stroke-width="0.9" stroke-dasharray="2.5,1.6"/><path d="M360.3,1052.2 L360.3,1144.5 L509.5,1144.5" fill="none" stroke="#bdb8bc" stroke-width="0.9" stroke-dasharray="2.5,1.6"/><path d="M310.5,1122.6 L310.5,1265" fill="none" stroke="#bdb8bc" stroke-width="0.9" stroke-dasharray="2.5,1.6"/><path d="M394.5,1144.5 L394.5,1265" fill="none" stroke="#bdb8bc" stroke-width="0.9" stroke-dasharray="2.5,1.6"/><path d="M478.4,955 L478.4,1135" fill="none" stroke="#bdb8bc" stroke-width="0.9" stroke-dasharray="2.5,1.6"/><path d="M478.4,1030.4 L605,1030.4" fill="none" stroke="#bdb8bc" stroke-width="0.9" stroke-dasharray="2.5,1.6"/><path d="M478.4,1098.9 L571.7,1098.9" fill="none" stroke="#bdb8bc" stroke-width="0.9" stroke-dasharray="2.5,1.6"/><path d="M511.6,1144.5 L511.6,1230.5" fill="none" stroke="#bdb8bc" stroke-width="0.9" stroke-dasharray="2.5,1.6"/><path d="M511.6,1166.2 L632,1166.8" fill="none" stroke="#bdb8bc" stroke-width="0.9" stroke-dasharray="2.5,1.6"/><path d="M310.5,1230.5 L637.6,1230.5" fill="none" stroke="#bdb8bc" stroke-width="0.9" stroke-dasharray="2.5,1.6"/><path d="M605,955 L607,1030 L605,1085 L605,1110" fill="none" stroke="#bdb8bc" stroke-width="0.9" stroke-dasharray="2.5,1.6"/><path d="M605,1088.5 L700,1088.5" fill="none" stroke="#bdb8bc" stroke-width="0.9" stroke-dasharray="2.5,1.6"/><path d="M617.6,1154 L689.6,1154" fill="none" stroke="#bdb8bc" stroke-width="0.9" stroke-dasharray="2.5,1.6"/><path d="M637.6,1184 L637.6,1242 L712,1242" fill="none" stroke="#bdb8bc" stroke-width="0.9" stroke-dasharray="2.5,1.6"/><path d="M704,1110.8 L763,1110.8" fill="none" stroke="#bdb8bc" stroke-width="0.9" stroke-dasharray="2.5,1.6"/><path d="M763,1127.6 L802.3,1127.6" fill="none" stroke="#bdb8bc" stroke-width="0.9" stroke-dasharray="2.5,1.6"/><path d="M756,1131.6 L756,1194 L747,1213" fill="none" stroke="#bdb8bc" stroke-width="0.9" stroke-dasharray="2.5,1.6"/><path d="M802.3,1127.6 L802.3,1194" fill="none" stroke="#bdb8bc" stroke-width="0.9" stroke-dasharray="2.5,1.6"/><path d="M874.3,1114 L874.3,1173.2 L919.8,1173.2" fill="none" stroke="#bdb8bc" stroke-width="0.9" stroke-dasharray="2.5,1.6"/><path d="M886,1122 L962.5,1122 L972,1141 L960,1165 L955,1172.4" fill="none" stroke="#bdb8bc" stroke-width="0.9" stroke-dasharray="2.5,1.6"/><path d="M744,1239.5 L960,1239.5" fill="none" stroke="#bdb8bc" stroke-width="0.9" stroke-dasharray="2.5,1.6"/><path d="M891,1173 L891,1184 L912,1178" fill="none" stroke="#bdb8bc" stroke-width="0.9" stroke-dasharray="2.5,1.6"/><path d="M840,1200 L856,1226 L880,1220 L905,1195 L912,1178" fill="none" stroke="#bdb8bc" stroke-width="0.9" stroke-dasharray="2.5,1.6"/><path d="M993.7,1052 L993.7,1122" fill="none" stroke="#bdb8bc" stroke-width="0.9" stroke-dasharray="2.5,1.6"/><path d="M1012,1052 L1020,1105" fill="none" stroke="#bdb8bc" stroke-width="0.9" stroke-dasharray="2.5,1.6"/><path d="M993.7,1105 L1037,1105" fill="none" stroke="#bdb8bc" stroke-width="0.9" stroke-dasharray="2.5,1.6"/><path d="M993.7,1122 L1020,1122" fill="none" stroke="#bdb8bc" stroke-width="0.9" stroke-dasharray="2.5,1.6"/><path d="M1034.5,1045 L1034.5,1105" fill="none" stroke="#bdb8bc" stroke-width="0.9" stroke-dasharray="2.5,1.6"/><path d="M900,1016 L933.6,1030.7 L943,1040 L962.5,1045" fill="none" stroke="#bdb8bc" stroke-width="0.9" stroke-dasharray="2.5,1.6"/><path d="M696,1090 L712,1122 L696,1146 L689.6,1158.8 L692.8,1178 L704,1186 L712,1202 L723,1218 L728,1234 L724.7,1249" fill="none" stroke="#bdb8bc" stroke-width="0.9" stroke-dasharray="2.5,1.6"/><path d="M792,1198.7 L776,1208 L760,1211.5 L747,1214.7" fill="none" stroke="#bdb8bc" stroke-width="0.9" stroke-dasharray="2.5,1.6"/><path d="M840,1200 L872,1154 L875,1150.8" fill="none" stroke="#bdb8bc" stroke-width="0.9" stroke-dasharray="2.5,1.6"/><path d="M202,954 L640,954 L680,960 L745,965 L790,990 L808,1003 L822,1025 L842,1055 L850,1080 L845,1105 L838,1126 L870,1116 L902,1100 L905,1088 L931,1084.7 L948,1066.7 L969.7,1052.3 L1025,1052.3 L1034.5,1045 L1049,1021 L1063,994 L1067,993 L1068,998 L1080,995.4 L1087.7,1002 L1087.7,1035.4 L1094,1039 L1095.4,1049.6" fill="none" stroke="#b5b1b5" stroke-width="1.3"/><path d="M356,990 L347.8,1006.6 L353,1027.3 L352,1044 L360.3,1056.3 L366.5,1060.5" fill="none" stroke="#9ec3ec" stroke-width="1.2"/><path d="M500,990 L536.5,1017 L542.7,1052 L534.4,1058.4 L559.3,1087.4 L571.7,1097.8 L580,1103 L605,1110 L617.4,1147.6 L629.8,1172.5 L638.4,1184.4 L664,1181 L680,1195.6 L696,1195.6" fill="none" stroke="#9ec3ec" stroke-width="1.2"/><path d="M320,975 L340,965 L380,972 L430,978 L470,968 L520,975 L536.5,1017" fill="none" stroke="#9ec3ec" stroke-width="1.2"/><ellipse cx="308" cy="1010" rx="20" ry="20" fill="url(#pb)" opacity="0.7"/><ellipse cx="344" cy="1146" rx="20" ry="20" fill="url(#pb)" opacity="0.75"/><ellipse cx="465" cy="1185" rx="17" ry="25" fill="url(#pb)" opacity="0.95"/><ellipse cx="656" cy="1048" rx="22" ry="20" fill="url(#pb)" opacity="1"/><ellipse cx="762" cy="1060" rx="18" ry="20" fill="url(#pb)" opacity="0.7"/><ellipse cx="638" cy="1190" rx="20" ry="20" fill="url(#pb)" opacity="1"/><ellipse cx="856" cy="1142" rx="18" ry="14" fill="url(#pb)" opacity="0.45"/><ellipse cx="984" cy="1103" rx="18" ry="18" fill="url(#pb)" opacity="0.55"/><ellipse cx="1010" cy="1145" rx="20" ry="14" fill="url(#pb)" opacity="0.5"/><ellipse cx="1025" cy="1106" rx="14" ry="12" fill="url(#pb)" opacity="0.45"/><ellipse cx="808" cy="1176" rx="18" ry="14" fill="url(#pb)" opacity="0.45"/><ellipse cx="755" cy="1211" rx="18" ry="16" fill="url(#pb)" opacity="0.6"/><ellipse cx="772" cy="1245" rx="22" ry="18" fill="url(#pb)" opacity="0.9"/><circle cx="940.8" cy="1185.6" r="27" fill="url(#hot)"/></g></svg>
<div style="position:absolute;left:0;top:0;width:2251px;height:1249px;clip-path:inset(948.5px 1058.3px 0 45.5px)">
<span style="position:absolute;left:313.00px;top:1005.00px;font-size:19.0px;line-height:1;font-weight:400;color:#434343;letter-spacing:0.271px;white-space:nowrap;font-family:'Liberation Sans',sans-serif;-webkit-text-stroke:0.45px #434343;text-shadow:0 0 2px #fff,0 0 2px #fff,0 0 2px #fff;">Helena</span>
<span style="position:absolute;left:127.60px;top:1031.00px;font-size:19.0px;line-height:1;font-weight:400;color:#434343;letter-spacing:0.800px;white-space:nowrap;font-family:'Liberation Sans',sans-serif;-webkit-text-stroke:0.45px #434343;text-shadow:0 0 2px #fff,0 0 2px #fff,0 0 2px #fff;">Portland</span>
<span style="position:absolute;left:250.00px;top:1076.00px;font-size:19.0px;line-height:1;font-weight:400;color:#434343;letter-spacing:0.185px;white-space:nowrap;font-family:'Liberation Sans',sans-serif;-webkit-text-stroke:0.45px #434343;text-shadow:0 0 2px #fff,0 0 2px #fff,0 0 2px #fff;">Boise</span>
<span style="position:absolute;left:492.60px;top:1000.00px;font-size:19.0px;line-height:1;font-weight:400;color:#434343;letter-spacing:0.326px;white-space:nowrap;font-family:'Liberation Sans',sans-serif;-webkit-text-stroke:0.45px #434343;text-shadow:0 0 2px #fff,0 0 2px #fff,0 0 2px #fff;">Bismarck</span>
<span style="position:absolute;left:514.00px;top:1058.00px;font-size:19.0px;line-height:1;font-weight:400;color:#434343;letter-spacing:0.577px;white-space:nowrap;font-family:'Liberation Sans',sans-serif;-webkit-text-stroke:0.45px #434343;text-shadow:0 0 2px #fff,0 0 2px #fff,0 0 2px #fff;">Pierre</span>
<span style="position:absolute;left:606.00px;top:1044.00px;font-size:19.0px;line-height:1;font-weight:400;color:#434343;letter-spacing:0.661px;white-space:nowrap;font-family:'Liberation Sans',sans-serif;-webkit-text-stroke:0.45px #434343;text-shadow:0 0 2px #fff,0 0 2px #fff,0 0 2px #fff;">Minneapolis</span>
<span style="position:absolute;left:289.00px;top:1140.00px;font-size:19.0px;line-height:1;font-weight:400;color:#434343;letter-spacing:-0.055px;white-space:nowrap;font-family:'Liberation Sans',sans-serif;-webkit-text-stroke:0.45px #434343;text-shadow:0 0 2px #fff,0 0 2px #fff,0 0 2px #fff;">Salt Lake City</span>
<span style="position:absolute;left:422.40px;top:1132.00px;font-size:19.0px;line-height:1;font-weight:400;color:#434343;letter-spacing:0.078px;white-space:nowrap;font-family:'Liberation Sans',sans-serif;-webkit-text-stroke:0.45px #434343;text-shadow:0 0 2px #fff,0 0 2px #fff,0 0 2px #fff;">Cheyenne</span>
<span style="position:absolute;left:603.30px;top:1122.00px;font-size:19.0px;line-height:1;font-weight:400;color:#434343;letter-spacing:0.209px;white-space:nowrap;font-family:'Liberation Sans',sans-serif;-webkit-text-stroke:0.45px #434343;text-shadow:0 0 2px #fff,0 0 2px #fff,0 0 2px #fff;">Des Moines</span>
<span style="position:absolute;left:720.00px;top:1115.00px;font-size:19.0px;line-height:1;font-weight:400;color:#434343;letter-spacing:-0.024px;white-space:nowrap;font-family:'Liberation Sans',sans-serif;-webkit-text-stroke:0.45px #434343;text-shadow:0 0 2px #fff,0 0 2px #fff,0 0 2px #fff;">Chicago</span>
<span style="position:absolute;left:812.00px;top:1125.00px;font-size:19.0px;line-height:1;font-weight:400;color:#434343;letter-spacing:0.084px;white-space:nowrap;font-family:'Liberation Sans',sans-serif;-webkit-text-stroke:0.45px #434343;text-shadow:0 0 2px #fff,0 0 2px #fff,0 0 2px #fff;">Cleveland</span>
<span style="position:absolute;left:858.50px;top:1074.00px;font-size:19.0px;line-height:1;font-weight:400;color:#434343;letter-spacing:1.049px;white-space:nowrap;font-family:'Liberation Sans',sans-serif;-webkit-text-stroke:0.45px #434343;text-shadow:0 0 2px #fff,0 0 2px #fff,0 0 2px #fff;">Toronto</span>
<span style="position:absolute;left:962.60px;top:1033.00px;font-size:19.0px;line-height:1;font-weight:400;color:#434343;letter-spacing:0.555px;white-space:nowrap;font-family:'Liberation Sans',sans-serif;-webkit-text-stroke:0.45px #434343;text-shadow:0 0 2px #fff,0 0 2px #fff,0 0 2px #fff;">Ottawa</span>
<span style="position:absolute;left:997.00px;top:1000.00px;font-size:19.0px;line-height:1;font-weight:400;color:#434343;letter-spacing:0.191px;white-space:nowrap;font-family:'Liberation Sans',sans-serif;-webkit-text-stroke:0.45px #434343;text-shadow:0 0 2px #fff,0 0 2px #fff,0 0 2px #fff;">Quebec</span>
<span style="position:absolute;left:1002.00px;top:1105.00px;font-size:19.0px;line-height:1;font-weight:400;color:#434343;letter-spacing:0.543px;white-space:nowrap;font-family:'Liberation Sans',sans-serif;-webkit-text-stroke:0.45px #434343;text-shadow:0 0 2px #fff,0 0 2px #fff,0 0 2px #fff;">Boston</span>
<span style="position:absolute;left:941.00px;top:1142.00px;font-size:19.0px;line-height:1;font-weight:400;color:#434343;letter-spacing:0.484px;white-space:nowrap;font-family:'Liberation Sans',sans-serif;-webkit-text-stroke:0.45px #434343;text-shadow:0 0 2px #fff,0 0 2px #fff,0 0 2px #fff;">New York</span>
<span style="position:absolute;left:940.50px;top:1182.00px;font-size:19.0px;line-height:1;font-weight:400;color:#434343;letter-spacing:0.493px;white-space:nowrap;font-family:'Liberation Sans',sans-serif;-webkit-text-stroke:0.45px #434343;text-shadow:0 0 2px #fff,0 0 2px #fff,0 0 2px #fff;">Washington</span>
<span style="position:absolute;left:764.00px;top:1178.00px;font-size:19.0px;line-height:1;font-weight:400;color:#434343;letter-spacing:0.421px;white-space:nowrap;font-family:'Liberation Sans',sans-serif;-webkit-text-stroke:0.45px #434343;text-shadow:0 0 2px #fff,0 0 2px #fff,0 0 2px #fff;">Cincinnati</span>
<span style="position:absolute;left:675.00px;top:1187.00px;font-size:19.0px;line-height:1;font-weight:400;color:#434343;letter-spacing:0.034px;white-space:nowrap;font-family:'Liberation Sans',sans-serif;-webkit-text-stroke:0.45px #434343;text-shadow:0 0 2px #fff,0 0 2px #fff,0 0 2px #fff;">St. Louis</span>
<span style="position:absolute;left:111.00px;top:1206.00px;font-size:19.0px;line-height:1;font-weight:400;color:#434343;letter-spacing:-0.239px;white-space:nowrap;font-family:'Liberation Sans',sans-serif;-webkit-text-stroke:0.45px #434343;text-shadow:0 0 2px #fff,0 0 2px #fff,0 0 2px #fff;">San Francisco</span>
<span style="position:absolute;left:249.00px;top:1241.00px;font-size:19.0px;line-height:1;font-weight:400;color:#434343;letter-spacing:-0.405px;white-space:nowrap;font-family:'Liberation Sans',sans-serif;-webkit-text-stroke:0.45px #434343;text-shadow:0 0 2px #fff,0 0 2px #fff,0 0 2px #fff;">Las Vegas</span>
<span style="position:absolute;left:510.60px;top:1171.00px;font-size:19.0px;line-height:1;font-weight:700;color:#3a3a4c;letter-spacing:0.640px;white-space:nowrap;font-family:'Liberation Sans',sans-serif;text-shadow:0 0 2px #fff,0 0 2px #fff;">UNITED</span>
<span style="position:absolute;left:496.00px;top:1196.00px;font-size:19.0px;line-height:1;font-weight:700;color:#3a3a4c;letter-spacing:-0.186px;white-space:nowrap;font-family:'Liberation Sans',sans-serif;text-shadow:0 0 2px #fff,0 0 2px #fff;">STATES OF</span>
<span style="position:absolute;left:503.00px;top:1220.00px;font-size:19.0px;line-height:1;font-weight:700;color:#3a3a4c;letter-spacing:0.110px;white-space:nowrap;font-family:'Liberation Sans',sans-serif;text-shadow:0 0 2px #fff,0 0 2px #fff;">AMERICA</span>
<span style="position:absolute;left:1127.00px;top:1052.00px;font-size:19.0px;line-height:1;font-weight:400;color:#434343;letter-spacing:0.000px;white-space:nowrap;font-family:'Liberation Sans',sans-serif;-webkit-text-stroke:0.45px #434343;text-shadow:0 0 2px #fff,0 0 2px #fff,0 0 2px #fff;">H</span>
<span style="position:absolute;left:1174.00px;top:1052.00px;font-size:19.0px;line-height:1;font-weight:400;color:#434343;letter-spacing:0.000px;white-space:nowrap;font-family:'Liberation Sans',sans-serif;-webkit-text-stroke:0.45px #434343;text-shadow:0 0 2px #fff,0 0 2px #fff,0 0 2px #fff;">x</span>
<span style="position:absolute;left:113.00px;top:938.00px;font-size:19.0px;line-height:1;font-weight:400;color:#434343;letter-spacing:-0.262px;white-space:nowrap;font-family:'Liberation Sans',sans-serif;-webkit-text-stroke:0.45px #434343;text-shadow:0 0 2px #fff,0 0 2px #fff,0 0 2px #fff;">Vancouver</span>
<span style="position:absolute;left:141.50px;top:980.00px;font-size:19.0px;line-height:1;font-weight:400;color:#434343;letter-spacing:0.152px;white-space:nowrap;font-family:'Liberation Sans',sans-serif;-webkit-text-stroke:0.45px #434343;text-shadow:0 0 2px #fff,0 0 2px #fff,0 0 2px #fff;">Seattle</span>
<span style="position:absolute;left:673.00px;top:960.00px;font-size:19.0px;line-height:1;font-weight:400;color:#434343;letter-spacing:0.071px;white-space:nowrap;font-family:'Liberation Sans',sans-serif;-webkit-text-stroke:0.45px #434343;text-shadow:0 0 2px #fff,0 0 2px #fff,0 0 2px #fff;">Thunder Bay</span>
<div style="position:absolute;left:45.5px;top:948.5px;width:1147.2px;height:54.0px;background:rgba(255,255,255,0.62);border-bottom:1px solid #d6d6d6"></div>
</div>
<span style="position:absolute;left:541.40px;top:966.00px;font-size:20.5px;line-height:1;font-weight:400;color:#111;letter-spacing:-0.587px;white-space:nowrap;font-family:'Liberation Sans',sans-serif;-webkit-text-stroke:0.35px #111;">Patient Zip Codes</span>
<div style="position:absolute;left:1140px;top:1017px;width:38.6px;height:77.7px;background:#fff;border-radius:5px;box-shadow:0 0 0 2px rgba(0,0,0,0.08)"></div>
<div style="position:absolute;left:1140px;top:1056px;width:38.59999999999991px;height:1px;background:#ddd"></div>
<svg style="position:absolute;left:1140px;top:1017px" width="39" height="78" viewBox="0 0 39 78"><path d="M19.3 11.5 V27.5 M11.3 19.5 H27.3 M11.3 58.5 H27.3" stroke="#222" stroke-width="3"/></svg>
<div style="position:absolute;left:45.5px;top:948.5px;width:1147.2px;height:311.5px;border:1px solid #e3e3e3;border-radius:4px;box-sizing:border-box"></div>
<div style="position:absolute;left:2122.5px;top:179.5px;width:24.199999999999818px;height:1069.5px;background:#f1f1f1"></div>
<div style="position:absolute;left:2123.8px;top:229px;width:21.199999999999818px;height:769px;background:#c1c1c1"></div>
<svg style="position:absolute;left:2126px;top:186px" width="16" height="12" viewBox="0 0 16 12"><path d="M2.5 9.5 L8 3 L13.5 9.5 Z" fill="#505050"/></svg>
<div style="position:absolute;left:2166px;top:161px;width:65px;height:1088px;background:#fff;border-left:1px solid #e3e3e3;box-sizing:border-box"></div>
<svg style="position:absolute;left:2190px;top:182px" width="22" height="22" viewBox="0 0 22 22"><path d="M15.5 4.5 L8.5 11 L15.5 17.5" fill="none" stroke="#10372a" stroke-width="2.4"/></svg>
<svg style="position:absolute;left:2174px;top:234px" width="40" height="36" viewBox="0 0 40 36">
<path d="M7.5 4.2 H25.5 Q28.5 4.2 28.5 7.2 V19.8 Q28.5 22.8 25.5 22.8 H16 L10.8 27.5 V22.8 H7.5 Q4.5 22.8 4.5 19.8 V7.2 Q4.5 4.2 7.5 4.2 Z" fill="none" stroke="#ff7f41" stroke-width="1.8" stroke-linejoin="round"/>
<path d="M28.5 8.2 H30.5 Q33.5 8.2 33.5 11.2 V24.3 Q33.5 27.3 30.5 27.3 H28.8 V31.5 L23.8 27.3 H17 Q14.6 27.3 14 25.5" fill="none" stroke="#ff7f41" stroke-width="1.8" stroke-linejoin="round"/>
</svg>
<div style="position:absolute;left:2170.5px;top:283px;width:47.09999999999991px;height:1px;background:#e3e3e3"></div>
<div style="position:absolute;left:2220.2px;top:221.8px;width:8.600000000000364px;height:622.2px;background:#c1c1c1;border-radius:4px"></div>
<div style="position:absolute;left:2167.0px;top:291.2px;width:50.6px;height:50.6px;border-radius:50%;background:#00609c"></div>
<span style="position:absolute;left:2181.93px;top:307.00px;font-size:21.5px;line-height:1;font-weight:400;color:#fff;letter-spacing:0.000px;white-space:nowrap;font-family:'Liberation Sans',sans-serif;">JJ</span>
<div style="position:absolute;left:2167.0px;top:357.4px;width:50.6px;height:50.6px;border-radius:50%;background:#00609c"></div>
<span style="position:absolute;left:2178.43px;top:373.00px;font-size:21.5px;line-height:1;font-weight:400;color:#fff;letter-spacing:0.000px;white-space:nowrap;font-family:'Liberation Sans',sans-serif;">JM</span>
<div style="position:absolute;left:2167.0px;top:423.09999999999997px;width:50.6px;height:50.6px;border-radius:50%;background:#00609c"></div>
<span style="position:absolute;left:2177.63px;top:439.00px;font-size:21.5px;line-height:1;font-weight:400;color:#fff;letter-spacing:0.000px;white-space:nowrap;font-family:'Liberation Sans',sans-serif;">BE</span>
<div style="position:absolute;left:2167.0px;top:488.3px;width:50.6px;height:50.6px;border-radius:50%;background:#00609c"></div>
<span style="position:absolute;left:2179.63px;top:504.00px;font-size:21.5px;line-height:1;font-weight:400;color:#fff;letter-spacing:0.000px;white-space:nowrap;font-family:'Liberation Sans',sans-serif;">PJ</span>
<div style="position:absolute;left:2167.0px;top:554.1px;width:50.6px;height:50.6px;border-radius:50%;background:#00609c"></div>
<span style="position:absolute;left:2179.63px;top:570.00px;font-size:21.5px;line-height:1;font-weight:400;color:#fff;letter-spacing:0.000px;white-space:nowrap;font-family:'Liberation Sans',sans-serif;">PJ</span>
<div style="position:absolute;left:2167.0px;top:685.7px;width:50.6px;height:50.6px;border-radius:50%;background:#00609c"></div>
<span style="position:absolute;left:2181.93px;top:702.00px;font-size:21.5px;line-height:1;font-weight:400;color:#fff;letter-spacing:0.000px;white-space:nowrap;font-family:'Liberation Sans',sans-serif;">JJ</span>
<div style="position:absolute;left:2167.0px;top:816.5px;width:50.6px;height:50.6px;border-radius:50%;background:#00609c"></div>
<span style="position:absolute;left:2179.63px;top:832.00px;font-size:21.5px;line-height:1;font-weight:400;color:#fff;letter-spacing:0.000px;white-space:nowrap;font-family:'Liberation Sans',sans-serif;">PJ</span>
<div style="position:absolute;left:2167.0px;top:882.6px;width:50.6px;height:50.6px;border-radius:50%;background:#00609c"></div>
<span style="position:absolute;left:2177.63px;top:898.00px;font-size:21.5px;line-height:1;font-weight:400;color:#fff;letter-spacing:0.000px;white-space:nowrap;font-family:'Liberation Sans',sans-serif;">AR</span>
<div style="position:absolute;left:2167.0px;top:947.7px;width:50.6px;height:50.6px;border-radius:50%;background:#00609c"></div>
<span style="position:absolute;left:2181.93px;top:964.00px;font-size:21.5px;line-height:1;font-weight:400;color:#fff;letter-spacing:0.000px;white-space:nowrap;font-family:'Liberation Sans',sans-serif;">JJ</span>
<div style="position:absolute;left:2167.1px;top:620.7px;width:22.8px;height:22.8px;border-radius:50%;background:#00609c"></div>
<span style="position:absolute;left:2171.00px;top:627.00px;font-size:10.5px;line-height:1;font-weight:400;color:#fff;letter-spacing:0.000px;white-space:nowrap;font-family:'Liberation Sans',sans-serif;">AR</span>
<div style="position:absolute;left:2195.2px;top:620.7px;width:22.8px;height:22.8px;border-radius:50%;background:#00609c"></div>
<span style="position:absolute;left:2199.60px;top:627.00px;font-size:10.5px;line-height:1;font-weight:400;color:#fff;letter-spacing:0.000px;white-space:nowrap;font-family:'Liberation Sans',sans-serif;">BE</span>
<div style="position:absolute;left:2167.1px;top:646.9000000000001px;width:22.8px;height:22.8px;border-radius:50%;background:#00609c"></div>
<span style="position:absolute;left:2171.88px;top:653.00px;font-size:10.5px;line-height:1;font-weight:400;color:#fff;letter-spacing:0.000px;white-space:nowrap;font-family:'Liberation Sans',sans-serif;">JM</span>
<div style="position:absolute;left:2195.2px;top:646.9000000000001px;width:22.8px;height:22.8px;border-radius:50%;background:#00609c"></div>
<span style="position:absolute;left:2200.60px;top:653.00px;font-size:10.5px;line-height:1;font-weight:400;color:#fff;letter-spacing:0.000px;white-space:nowrap;font-family:'Liberation Sans',sans-serif;">PJ</span>
<div style="position:absolute;left:2167.1px;top:751.6px;width:22.8px;height:22.8px;border-radius:50%;background:#00609c"></div>
<span style="position:absolute;left:2171.00px;top:758.00px;font-size:10.5px;line-height:1;font-weight:400;color:#fff;letter-spacing:0.000px;white-space:nowrap;font-family:'Liberation Sans',sans-serif;">AR</span>
<div style="position:absolute;left:2195.2px;top:751.6px;width:22.8px;height:22.8px;border-radius:50%;background:#00609c"></div>
<span style="position:absolute;left:2199.60px;top:758.00px;font-size:10.5px;line-height:1;font-weight:400;color:#fff;letter-spacing:0.000px;white-space:nowrap;font-family:'Liberation Sans',sans-serif;">BE</span>
<div style="position:absolute;left:2167.1px;top:777.8000000000001px;width:22.8px;height:22.8px;border-radius:50%;background:#00609c"></div>
<span style="position:absolute;left:2171.88px;top:784.00px;font-size:10.5px;line-height:1;font-weight:400;color:#fff;letter-spacing:0.000px;white-space:nowrap;font-family:'Liberation Sans',sans-serif;">JM</span>
<div style="position:absolute;left:2195.2px;top:777.8000000000001px;width:22.8px;height:22.8px;border-radius:50%;background:#00609c"></div>
<span style="position:absolute;left:2200.60px;top:784.00px;font-size:10.5px;line-height:1;font-weight:400;color:#fff;letter-spacing:0.000px;white-space:nowrap;font-family:'Liberation Sans',sans-serif;">PJ</span>
<div style="position:absolute;left:2167px;top:1012.7px;width:56px;height:18.3px;overflow:hidden"><div style="position:absolute;left:0;top:0;width:50.6px;height:50.6px;border-radius:50%;background:#00609c;margin-left:0px"></div></div>
<div style="position:absolute;left:2173px;top:1042.4px;width:53px;height:1.0px;background:#e3e3e3"></div>
<div style="position:absolute;left:2173px;top:1108.4px;width:53px;height:1.0px;background:#e3e3e3"></div>
<div style="position:absolute;left:2173px;top:1173.2px;width:53px;height:1.0px;background:#e3e3e3"></div>
<svg style="position:absolute;left:2180px;top:1058px" width="34" height="34" viewBox="0 0 34 34">
<path d="M27.6 12.5 A12.8 12.8 0 1 1 22.5 5.3" fill="none" stroke="#ff7f41" stroke-width="1.8"/>
<path d="M10.5 16.5 L15.5 21.5 L27 9.5" fill="none" stroke="#ff7f41" stroke-width="1.8" stroke-linecap="round" stroke-linejoin="round"/></svg>
<svg style="position:absolute;left:2180px;top:1126px" width="34" height="34" viewBox="0 0 34 34">
<path d="M5 6 Q3.5 6 3.5 7.5 V20 Q3.5 21.5 5 21.5 H8.5 V26 L13 21.5 H28 Q29.5 21.5 29.5 20 V7.5 Q29.5 6 28 6 Z" fill="none" stroke="#ff7f41" stroke-width="1.8" stroke-linejoin="round"/>
<path d="M10 11.5 H23 M10 15.5 H23" stroke="#ff7f41" stroke-width="1.8"/></svg>
<svg style="position:absolute;left:2180px;top:1191px" width="34" height="34" viewBox="0 0 34 34">
<circle cx="16.5" cy="16.8" r="12.8" fill="none" stroke="#ff7f41" stroke-width="1.8"/>
<path d="M12.5 13 Q12.5 8.8 16.5 8.8 Q20.5 8.8 20.5 12.6 Q20.5 15 17.8 16.4 Q16.5 17.2 16.5 19.6" fill="none" stroke="#ff7f41" stroke-width="1.8"/>
<circle cx="16.5" cy="23.6" r="1.3" fill="#ff7f41"/></svg>
<div style="position:absolute;left:2231px;top:0px;width:20px;height:1249px;background:#f1f1f1"></div>
<div style="position:absolute;left:2233.3px;top:24px;width:17.699999999999818px;height:975px;background:#c1c1c1"></div>
<svg style="position:absolute;left:2235px;top:5px" width="16" height="14" viewBox="0 0 16 14"><path d="M2.5 10.5 L8 4 L13.5 10.5 Z" fill="#a3a3a3"/></svg>
<svg style="position:absolute;left:2235px;top:1229px" width="16" height="14" viewBox="0 0 16 14"><path d="M2.5 3.5 L13.5 3.5 L8 10 Z" fill="#505050"/></svg>
</div></body></html>
